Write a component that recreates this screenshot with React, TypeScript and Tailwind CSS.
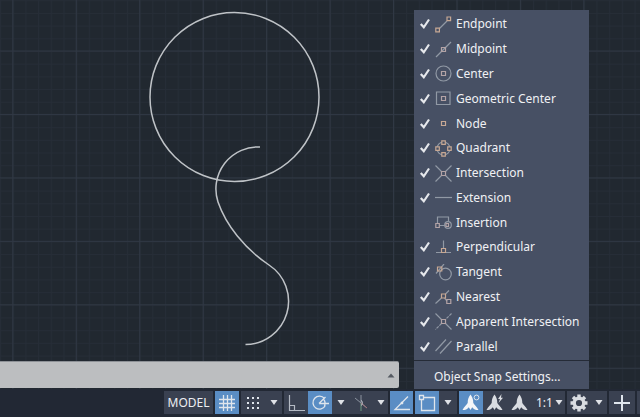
import { useState } from 'react'
import type { ReactNode } from 'react'
import clsx from 'clsx'

interface Snap {
  name: string
  on: boolean
  icon: ReactNode
}

const TAN = '#c7a894'
const PINK = '#b3a3a6'

const snaps: Snap[] = [
  {
    name: 'Endpoint',
    on: true,
    icon: (
      <>
        <path d="M4.5 12.5 12 5" />
        <path stroke={TAN} d="M.8 12.2h3.6v3.6H.8zM12 1h3.6v3.6H12z" />
      </>
    ),
  },
  {
    name: 'Midpoint',
    on: true,
    icon: (
      <>
        <path d="M1 16 16 1" />
        <path stroke={PINK} d="M6.5 6.5h4v4h-4z" />
      </>
    ),
  },
  {
    name: 'Center',
    on: true,
    icon: (
      <>
        <circle cx="8.5" cy="8.5" r="7.5" />
        <path stroke={PINK} d="M6.5 6.5h4v4h-4z" />
      </>
    ),
  },
  {
    name: 'Geometric Center',
    on: true,
    icon: (
      <>
        <path d="M1.5 2h13.5v12.5H1.5z" />
        <path stroke={PINK} d="M6.5 6.5h4v4h-4z" />
      </>
    ),
  },
  { name: 'Node', on: true, icon: <path stroke={TAN} d="M6.5 6.5h4v4h-4z" /> },
  {
    name: 'Quadrant',
    on: true,
    icon: (
      <>
        <circle cx="8.5" cy="8.5" r="6.5" />
        <path
          fill="#475064"
          stroke={TAN}
          d="M6.8.8h3.5v3.5H6.8zM6.8 12.7h3.5v3.5H6.8zM.8 6.8h3.5v3.5H.8zM12.7 6.8h3.5v3.5h-3.5z"
        />
      </>
    ),
  },
  {
    name: 'Intersection',
    on: true,
    icon: (
      <>
        <path d="M.5.5l6 6M10.5 10.5l6 6M16.5.5l-6 6M6.5 10.5l-6 6" />
        <path stroke={PINK} d="M6.5 6.5h4v4h-4z" />
      </>
    ),
  },
  { name: 'Extension', on: true, icon: <path d="M0 8.5h17" /> },
  {
    name: 'Insertion',
    on: false,
    icon: (
      <>
        <path d="M2.5 9V3h11v4.5M4.5 11.5h6" />
        <circle cx="13" cy="11" r="3.3" />
        <path stroke={PINK} d="M.8 9.5h3.5v4H.8zM11 9.5h2.5v3H11z" />
      </>
    ),
  },
  {
    name: 'Perpendicular',
    on: true,
    icon: (
      <>
        <path d="M8.5 1.5v8M1 13.5h5.5M10.5 13.5H16" />
        <path stroke={TAN} d="M6.5 9.5h4v4h-4z" />
      </>
    ),
  },
  {
    name: 'Tangent',
    on: true,
    icon: (
      <>
        <circle cx="10.5" cy="10" r="5.8" />
        <path d="M1 9.5 9 0" />
        <path stroke={TAN} d="M2.5 3h4.3v4H2.5z" />
      </>
    ),
  },
  {
    name: 'Nearest',
    on: true,
    icon: (
      <>
        <path d="M.5 14.5 6.5 9M10.5 5 14 1.5M9.5 9l2.5 3" />
        <path stroke={TAN} d="M6.5 5h4v4h-4z" />
        <path stroke={PINK} d="M11.8 10.5h4v4h-4z" />
      </>
    ),
  },
  {
    name: 'Apparent Intersection',
    on: true,
    icon: (
      <>
        <path d="M.5.5l6 6M10.5 10.5l6 6" />
        <path strokeDasharray="3 1" d="M16.5.5l-6 6M6.5 10.5l-6 6" />
        <path stroke={PINK} d="M6.5 6.5h4v4h-4z" />
      </>
    ),
  },
  { name: 'Parallel', on: true, icon: <path d="M.5 13 11 1.5M5 15.5 16.5 3" /> },
]

function Caret() {
  return (
    <svg viewBox="0 0 8 5" className="h-[5px] w-2" fill="#dfe2e7">
      <path d="M.5 0h7L4 5z" />
    </svg>
  )
}

function Tool({ label, active, className, children }: { label: string; active?: boolean; className?: string; children: ReactNode }) {
  return (
    <button
      type="button"
      aria-label={label}
      aria-pressed={active}
      className={clsx('flex items-center justify-center', active ? 'bg-[#5a8dc4]' : 'bg-[#3a4151]', className ?? 'w-6')}
    >
      {children}
    </button>
  )
}

function Glyph({ children }: { children: ReactNode }) {
  return (
    <svg viewBox="0 0 20 20" className="size-5 shrink-0" fill="none" stroke="#dfe5ec">
      {children}
    </svg>
  )
}

const annoShape = 'M9.5 1.5C11.5 4 12.3 6.5 12.3 10c1.2 2 3.5 3.5 5.2 7-2.8 0-5-.8-6.3-2.8L9.5 17l-1.7-2.8C6.5 16.2 4.3 17 1.5 17c1.7-3.5 4-5 5.2-7 0-3.5.8-6 2.8-8.5z'

function Drawing() {
  return (
    <svg className="absolute inset-0 size-full" fill="none">
      <defs>
        <pattern id="minor" x="12.7" y="51" width="12.69" height="12.69" patternUnits="userSpaceOnUse">
          <path d="M0 .5h12.69M.5 0v12.69" stroke="#262d37" />
        </pattern>
        <pattern id="major" x="12.3" y="50.5" width="63.45" height="63.45" patternUnits="userSpaceOnUse">
          <path d="M0 .5h63.45M.5 0v63.45" stroke="#303844" />
        </pattern>
      </defs>
      <rect width="100%" height="100%" fill="url(#minor)" />
      <rect width="100%" height="100%" fill="url(#major)" />
      <g stroke="#bfc3c7" strokeWidth="1.5">
        <circle cx="234.5" cy="97" r="84.5" />
        <path d="M260 147A42 42 0 0 0 218 202C226 225 244 248 269 265A43.3 43.3 0 0 1 245.5 344.5" />
      </g>
    </svg>
  )
}

function SnapMenu() {
  const [items, setItems] = useState(snaps.map((s) => s.on))

  return (
    <div className="absolute top-[10px] right-[51px] bottom-0 flex w-[175px] flex-col bg-[#475064] text-[12px] text-[#f0f1f4]">
      <div className="grid flex-1 auto-rows-fr pt-0.5 pb-px">
        {snaps.map((snap, i) => (
          <label key={snap.name} className="flex items-center pl-[5px] whitespace-nowrap">
            <span className="mr-1 grid w-3">
              <input
                type="checkbox"
                checked={items[i]}
                onChange={() => setItems(items.map((on, j) => (j === i ? !on : on)))}
                className="peer col-start-1 row-start-1 size-full appearance-none"
              />
              <svg viewBox="0 0 12 12" className="pointer-events-none invisible col-start-1 row-start-1 size-3 peer-checked:visible" fill="none" stroke="#e6e8ec" strokeWidth="2.2">
                <path d="M1.8 6 4.8 9.3 10 1.5" />
              </svg>
            </span>
            <svg viewBox="0 0 17 17" className="mr-1 size-[17px]" fill="none" stroke="#9199a5" strokeWidth="1.2">
              {snap.icon}
            </svg>
            {snap.name}
          </label>
        ))}
      </div>
      <button type="button" className="h-[29px] border-t border-[#252b37] pt-1 pl-5 text-left">
        Object Snap Settings...
      </button>
    </div>
  )
}

function StatusBar() {
  return (
    <footer className="flex h-7 justify-end gap-0.5 bg-[#222834] pt-0.5 pb-[3px] text-[12px] text-[#eceef2]">
      <button type="button" className="w-[49px] bg-[#3a4151]">
        MODEL
      </button>
      <Tool label="Grid" active>
        <Glyph>
          <path strokeWidth="1.3" d="M6.5 2v16M10.5 2v16M14.5 2v16M2 6.5h16M2 10.5h16M2 14.5h16" />
        </Glyph>
      </Tool>
      <div className="flex">
        <Tool label="Snap mode">
          <Glyph>
            <path strokeWidth="2" strokeDasharray="2 3" d="M4 5h12M4 10h12M4 15h12" />
          </Glyph>
        </Tool>
        <Tool label="Snap options" className="w-[17px]">
          <Caret />
        </Tool>
      </div>
      <div className="flex">
        <Tool label="Ortho">
          <Glyph>
            <path stroke="#b4bac4" strokeWidth="1.2" d="M3.5 2v15.5H19M3.5 12.5h5v5" />
          </Glyph>
        </Tool>
        <Tool label="Polar tracking" active>
          <Glyph>
            <path strokeWidth="1.3" d="M14.5 5.5a6.5 6.5 0 1 0 .8 7M9 10.5h10M9 10.5 15.5 4M13.5 6q2.5 3 1 7" />
          </Glyph>
        </Tool>
        <Tool label="Polar options" className="w-[17px]">
          <Caret />
        </Tool>
        <Tool label="Isometric drafting">
          <Glyph>
            <path stroke="#8b939f" d="M10 2v8M4 5l12 10" />
            <path stroke="#6b9a80" d="M10 10v8" />
            <path stroke="#9c6f77" d="M10 10l6 5" />
            <path stroke="#c3c9d1" d="M10 7.5q2.5 1 .5 5" />
          </Glyph>
        </Tool>
        <Tool label="Isometric options" className="w-[15px]">
          <Caret />
        </Tool>
      </div>
      <Tool label="Object snap tracking" active className="w-[23px]">
        <Glyph>
          <path strokeWidth="1.3" d="M16 3.5 3 16.5h15" />
          <circle cx="10" cy="10" r="1" fill="#fff" />
        </Glyph>
      </Tool>
      <div className="flex">
        <Tool label="Object snap" active>
          <Glyph>
            <path strokeWidth="1.3" d="M6.5 4.5H17.5v13H4.5v-11M2.5 2.5h4v4h-4z" />
          </Glyph>
        </Tool>
        <Tool label="Object snap options" className="w-[18px]">
          <Caret />
        </Tool>
      </div>
      <div className="flex">
        <Tool label="Annotation visibility" active>
          <Glyph>
            <path fill="#f3f5f8" stroke="none" d={annoShape} />
            <circle cx="15.5" cy="4.5" r="2.4" />
          </Glyph>
        </Tool>
        <Tool label="Auto scale">
          <Glyph>
            <path fill="#d9dce1" stroke="none" d={annoShape} />
            <path fill="#d9dce1" stroke="none" d="M16.5 1 13 6h2l-1.5 4 4.5-5.2h-2z" />
          </Glyph>
        </Tool>
        <Tool label="Annotation scale" className="w-[26px]">
          <Glyph>
            <path fill="#d9dce1" stroke="none" d={annoShape} />
          </Glyph>
        </Tool>
        <label className="relative flex w-8 items-center bg-[#3a4151] pl-[3px]">
          <select aria-label="Scale" className="w-full appearance-none outline-none">
            <option>1:1</option>
            <option>1:2</option>
          </select>
          <span className="pointer-events-none absolute right-0.5">
            <Caret />
          </span>
        </label>
      </div>
      <div className="flex">
        <Tool label="Workspace">
          <Glyph>
            <circle cx="10" cy="10" r="4.8" stroke="#d9dce1" strokeWidth="3.4" />
            <path stroke="#d9dce1" strokeWidth="3.4" d="M10 1.5v3M10 15.5v3M1.5 10h3M15.5 10h3M4 4l2 2M14 14l2 2M16 4l-2 2M6 14l-2 2" />
          </Glyph>
        </Tool>
        <Tool label="Workspace options" className="w-4">
          <Caret />
        </Tool>
      </div>
      <Tool label="Add" className="w-[26px]">
        <Glyph>
          <path strokeWidth="2" d="M10 2v16M2 10h16" />
        </Glyph>
      </Tool>
      <div className="w-[3px] bg-[#3a4151]" />
    </footer>
  )
}

export default function App() {
  return (
    <div className="flex min-h-screen flex-col bg-[#212830] font-['Noto_Sans',sans-serif]">
      <main className="relative flex flex-1 flex-col justify-end">
        <Drawing />
        <div className="relative mr-[241px] mb-px flex h-[27px] items-center rounded-r-xs border-t border-[#8d9196] bg-[#bcbec0]">
          <input aria-label="Command line" className="h-full min-w-0 flex-1 px-2 text-[12px] text-[#222834] outline-none" />
          <button type="button" aria-label="Command history" className="px-1">
            <svg viewBox="0 0 8 5" className="h-[5px] w-2" fill="#555a62">
              <path d="M.5 4.5h7L4 .5z" />
            </svg>
          </button>
        </div>
        <SnapMenu />
      </main>
      <StatusBar />
    </div>
  )
}
